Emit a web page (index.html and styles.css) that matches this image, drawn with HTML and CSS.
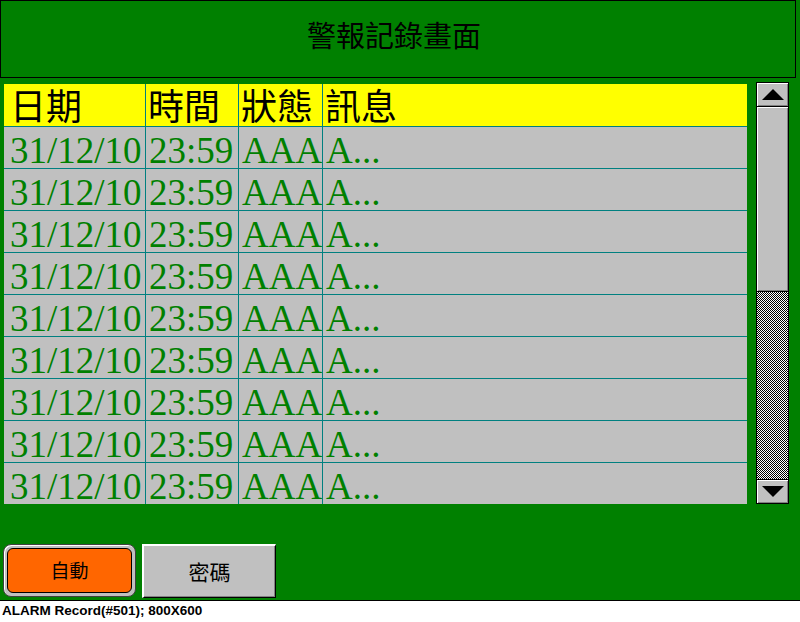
FILE: index.html
```html
<!DOCTYPE html>
<html>
<head>
<meta charset="utf-8">
<link rel="stylesheet" href="styles.css">
</head>
<body>
<div class="screen">
  <div class="title">警報記錄畫面</div>
  <div class="content">
    <div class="table">
      <div class="th c1">日期</div><div class="th">時間</div><div class="th">狀態</div><div class="th">訊息</div>
      <div class="td c1">31/12/10</div><div class="td">23:59</div><div class="td">AAA</div><div class="td">A...</div>
      <div class="td c1">31/12/10</div><div class="td">23:59</div><div class="td">AAA</div><div class="td">A...</div>
      <div class="td c1">31/12/10</div><div class="td">23:59</div><div class="td">AAA</div><div class="td">A...</div>
      <div class="td c1">31/12/10</div><div class="td">23:59</div><div class="td">AAA</div><div class="td">A...</div>
      <div class="td c1">31/12/10</div><div class="td">23:59</div><div class="td">AAA</div><div class="td">A...</div>
      <div class="td c1">31/12/10</div><div class="td">23:59</div><div class="td">AAA</div><div class="td">A...</div>
      <div class="td c1">31/12/10</div><div class="td">23:59</div><div class="td">AAA</div><div class="td">A...</div>
      <div class="td c1">31/12/10</div><div class="td">23:59</div><div class="td">AAA</div><div class="td">A...</div>
      <div class="td c1">31/12/10</div><div class="td">23:59</div><div class="td">AAA</div><div class="td">A...</div>
    </div>
    <div class="scrollbar">
      <div class="sb-btn sb-up"><svg width="22" height="11" viewBox="0 0 22 11"><polygon points="11,0 22,11 0,11" fill="#000"/></svg></div>
      <div class="sb-thumb"></div>
      <div class="sb-track"></div>
      <div class="sb-btn sb-down"><svg width="22" height="11" viewBox="0 0 22 11"><polygon points="0,0 22,0 11,11" fill="#000"/></svg></div>
    </div>
  </div>
  <div class="buttons">
    <div class="btn-auto"><div class="btn-auto-inner">自動</div></div>
    <div class="btn-pass">密碼</div>
  </div>
</div>
<div class="footer">ALARM Record(#501); 800X600</div>
</body>
</html>
```
FILE: styles.css
```css
html, body {
  margin: 0;
  padding: 0;
  background: #fff;
}
body {
  width: 800px;
  height: 622px;
  overflow: hidden;
}
.screen {
  height: 600px;
  background: #008000;
  border-bottom: 1px solid #000;
  box-sizing: content-box;
}
.title {
  box-sizing: border-box;
  width: 796px;
  height: 78px;
  border: 1px solid #000;
  font-family: "Noto Sans CJK TC", sans-serif;
  font-size: 29px;
  line-height: 66px;
  text-align: center;
  color: #000;
  padding-right: 8px;
}
.content {
  display: flex;
  align-items: flex-start;
  margin-top: 4px;
  padding-left: 4px;
  gap: 9px;
}
.table {
  margin-top: 2px;
  display: grid;
  grid-template-columns: 141px 92px 83px 424px;
  grid-template-rows: 42px repeat(9, 41px);
  gap: 1px;
  background: #008080;
  width: 743px;
}
.th {
  background: #ffff00;
  font-family: "Noto Sans CJK TC", sans-serif;
  font-size: 36px;
  line-height: 36px;
  padding-top: 2px;
  color: #000;
  padding-left: 2px;
  white-space: nowrap;
}
.th.c1 {
  padding-left: 6px;
}
.td {
  background: #c0c0c0;
  font-family: "Liberation Serif", "Times New Roman", serif;
  font-size: 37px;
  line-height: 35px;
  padding-top: 6px;
  color: #008000;
  padding-left: 3px;
  white-space: nowrap;
}
.td.c1 {
  padding-left: 6px;
}
.scrollbar {
  box-sizing: border-box;
  width: 33px;
  height: 422px;
  border: 1px solid #000;
  display: flex;
  flex-direction: column;
}
.sb-btn {
  height: 23px;
  background: #c0c0c0;
  box-shadow: inset 1px 1px #fff, inset -1px -1px #808080;
  display: flex;
  align-items: center;
  justify-content: center;
}
.sb-up {
  border-bottom: 1px solid #000;
}
.sb-down {
  border-top: 1px solid #000;
}
.sb-thumb {
  height: 184px;
  background: #c0c0c0;
  box-shadow: inset 1px 1px #fff, inset -1px -1px #808080;
  border-bottom: 1px solid #000;
}
.sb-track {
  height: 187px;
  background: repeating-conic-gradient(#000 0 25%, #fff 0 50%) 0 0 / 2px 2px;
}
.buttons {
  display: flex;
  align-items: flex-start;
  margin-top: 40px;
  padding-left: 3px;
  gap: 6px;
}
.btn-auto {
  box-sizing: border-box;
  width: 133px;
  height: 53px;
  border-radius: 8px;
  background: #c0c0c0;
  border: 1px solid #404040;
  box-shadow: inset 1px 1px #fff;
  padding: 3px;
}
.btn-auto-inner {
  box-sizing: border-box;
  height: 100%;
  border: 1px solid #000;
  border-radius: 6px;
  background: #ff6600;
  font-family: "Noto Sans CJK TC", sans-serif;
  font-size: 19px;
  color: #000;
  display: flex;
  align-items: center;
  justify-content: center;
  padding-bottom: 2px;
}
.btn-pass {
  box-sizing: border-box;
  width: 134px;
  height: 54px;
  background: #c0c0c0;
  border-top: 2px solid #fff;
  border-left: 2px solid #fff;
  border-right: 1px solid #000;
  border-bottom: 1px solid #000;
  box-shadow: inset -1px -1px #808080;
  font-family: "Noto Sans CJK TC", sans-serif;
  font-size: 21px;
  color: #000;
  display: flex;
  align-items: center;
  justify-content: center;
  padding-bottom: 2px;
}
.footer {
  height: 21px;
  padding-left: 2px;
  font-family: "Liberation Sans", Arial, sans-serif;
  font-weight: bold;
  font-size: 13.5px;
  line-height: 19px;
  color: #000;
  white-space: nowrap;
}
```
